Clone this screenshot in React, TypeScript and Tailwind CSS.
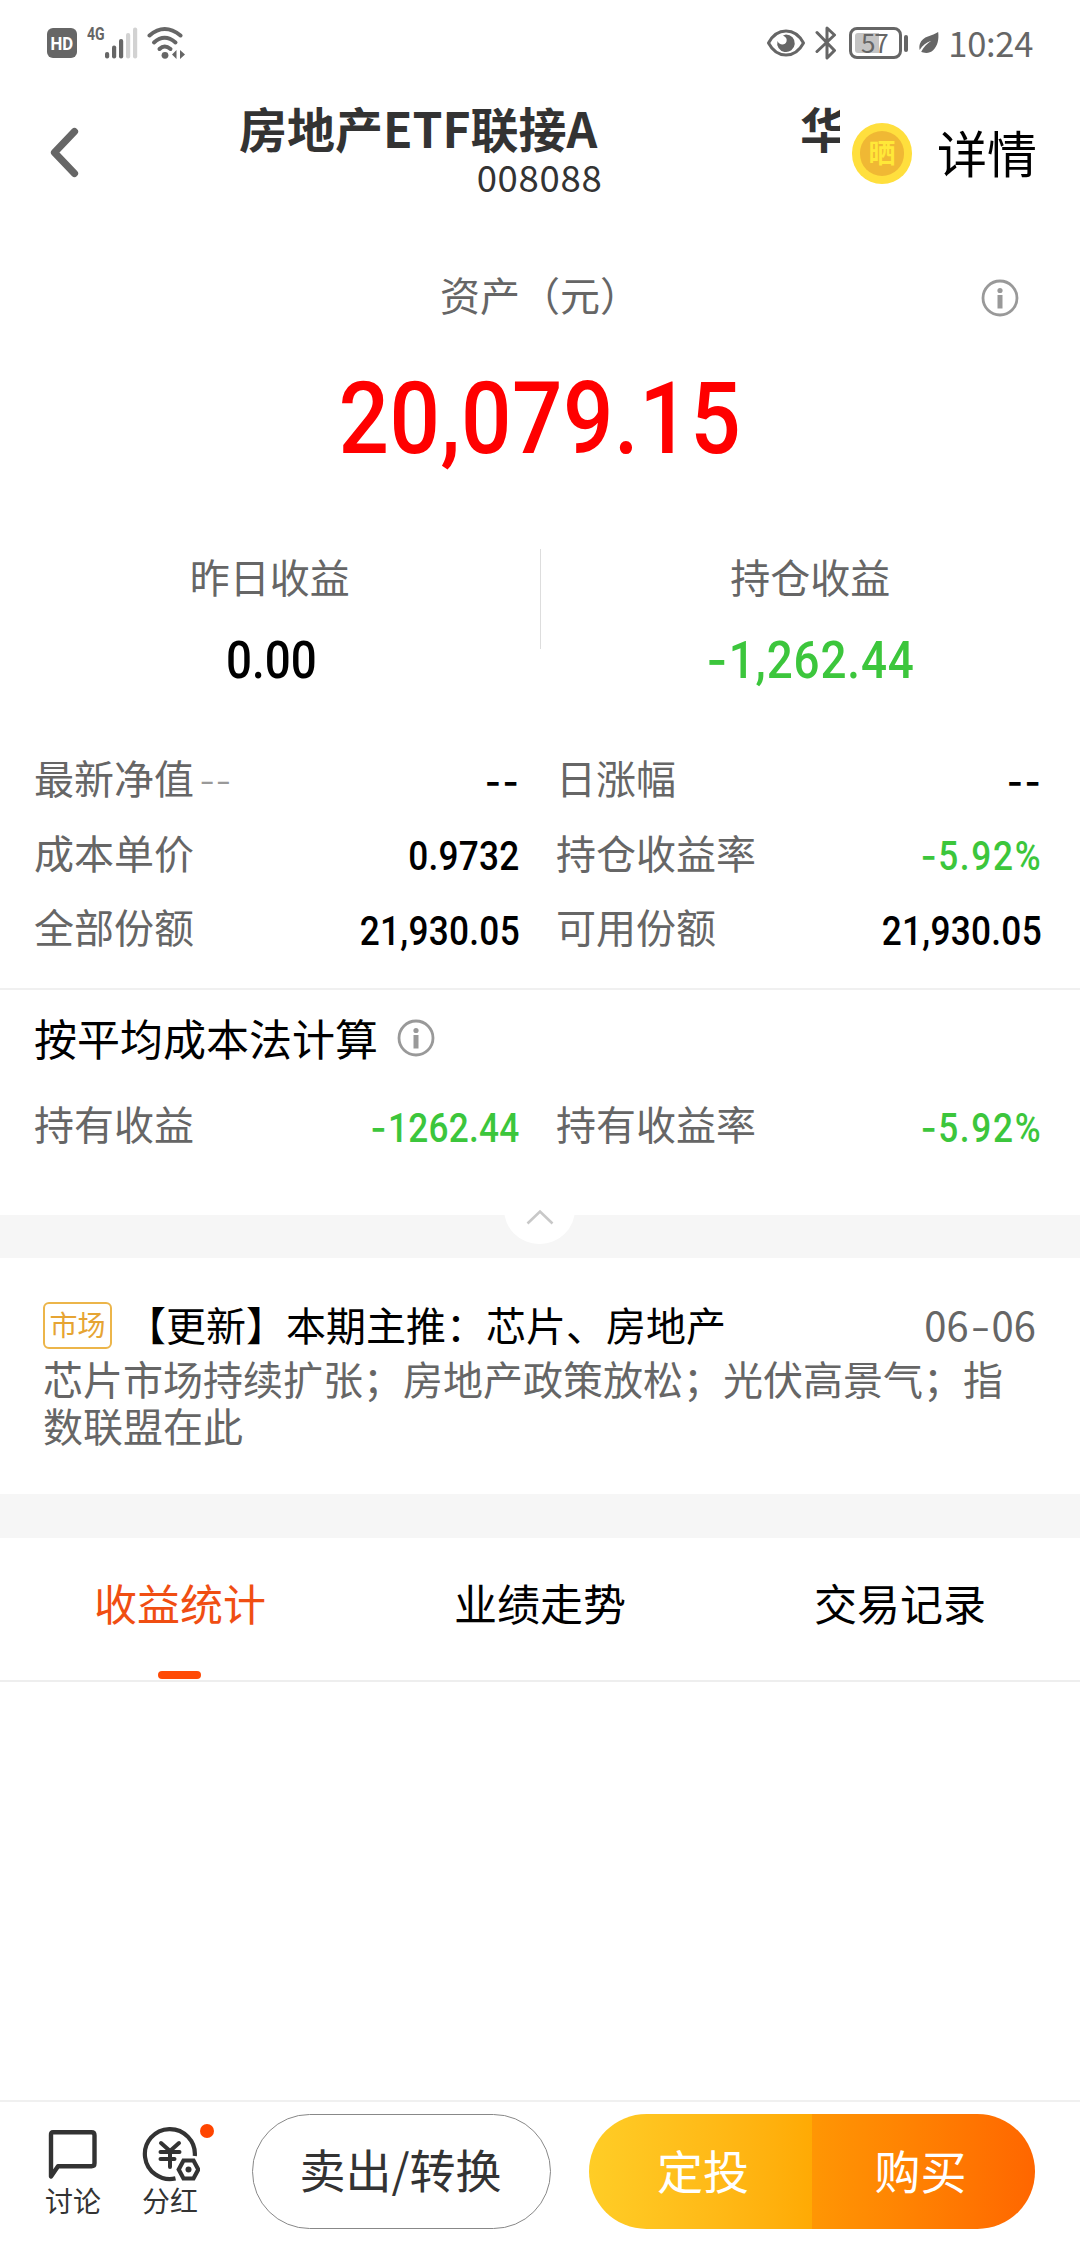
import type { ReactNode } from "react";

type Stat = {
  label: string;
  hint?: string;
  value: string;
  tone?: "up" | "down";
};

const HOLDING_STATS: Stat[] = [
  { label: "最新净值", hint: "--", value: "--" },
  { label: "日涨幅", value: "--" },
  { label: "成本单价", value: "0.9732" },
  { label: "持仓收益率", value: "-5.92%", tone: "down" },
  { label: "全部份额", value: "21,930.05" },
  { label: "可用份额", value: "21,930.05" },
];

const AVERAGE_STATS: Stat[] = [
  { label: "持有收益", value: "-1262.44", tone: "down" },
  { label: "持有收益率", value: "-5.92%", tone: "down" },
];

const TABS = ["收益统计", "业绩走势", "交易记录"];

export default function App() {
  return (
    <div className="flex h-[2244px] w-[1080px] flex-col overflow-hidden bg-white font-['Noto_Sans_CJK_SC',sans-serif] text-black">
      <StatusBar />
      <NavBar />
      <AssetSummary />

      <section className="grid h-[254px] shrink-0 grid-cols-[486px_486px] content-start gap-x-[36px] pl-[34px] pt-[6px]">
        {HOLDING_STATS.map((stat) => (
          <StatRow key={stat.label} stat={stat} />
        ))}
      </section>

      <section className="h-[227px] shrink-0 border-t-2 border-[#f0f0f0] pl-[34px]">
        <div className="flex h-[96px] items-center gap-[19px]">
          <h2 className="mb-[3px] text-[43px] leading-[60px]">按平均成本法计算</h2>
          <InfoIcon />
        </div>
        <div className="grid grid-cols-[486px_486px] gap-x-[36px]">
          {AVERAGE_STATS.map((stat) => (
            <StatRow key={stat.label} stat={stat} />
          ))}
        </div>
      </section>

      <div className="relative h-[43px] shrink-0 bg-[#f6f6f6]">
        <button
          type="button"
          aria-label="收起"
          className="absolute -top-[41px] left-[504px] flex h-[70px] w-[71px] items-end justify-center rounded-full bg-white pb-[18px]"
        >
          <svg width="30" height="18" viewBox="0 0 30 18" fill="none" aria-hidden="true">
            <path d="M2.5 15.5L15 3.5l12.500 12" stroke="#c8c8c8" strokeWidth="2.6" />
          </svg>
        </button>
      </div>

      <MarketNotice />
      <div className="h-[44px] shrink-0 bg-[#f6f6f6]" />
      <Tabs />
      <div className="flex-1" />
      <BottomBar />
    </div>
  );
}

function StatusBar() {
  return (
    <div className="flex h-[86px] shrink-0 items-center justify-between pl-[47px] pr-[47px] text-[#666666]">
      <div className="flex items-center">
        <span className="flex h-[30px] w-[30px] items-center justify-center rounded-[6px] bg-[#666666] font-['Roboto',sans-serif] text-[19px] font-bold leading-none text-white">
          <span className="scale-x-[0.88]">HD</span>
        </span>
        <span className="mb-[18px] ml-[10px] w-[18px] font-['Roboto',sans-serif] text-[18px] font-bold leading-none">
          <span className="inline-block origin-left scale-x-[0.78]">4G</span>
        </span>
        <svg width="34" height="34" viewBox="0 0 34 34" className="-ml-px" aria-hidden="true">
          <rect x="1" y="26" width="4.200" height="6.500" rx="2" fill="#666" />
          <rect x="8" y="19.500" width="4.200" height="13" rx="2" fill="#666" />
          <rect x="15" y="13" width="4.200" height="19.500" rx="2" fill="#666" />
          <rect x="22" y="7" width="4.200" height="25.500" rx="2" fill="#d2d2d2" />
          <rect x="29" y="1.500" width="4.200" height="31" rx="2" fill="#d2d2d2" />
        </svg>
        <svg width="40" height="34" viewBox="0 0 40 34" fill="none" className="ml-[9px]" aria-hidden="true">
          <g stroke="#666" strokeWidth="4" strokeLinecap="round">
            <path d="M2.500 9.500Q17.500-3.500 33.500 9.500" />
            <path d="M7 16.500Q17.500 7 28.500 16.500" />
            <path d="M12.500 23Q17.500 18 23.500 23" />
          </g>
          <circle cx="18" cy="29.300" r="3.400" fill="#666" />
          <path d="M25 28.500l4.500-4.500v9zM38 28.500l-5-4.500v9z" fill="#666" />
        </svg>
      </div>

      <div className="flex items-center">
        <svg width="40" height="28" viewBox="0 0 40 28" fill="none" aria-hidden="true">
          <path
            d="M2.500 14C7 5.500 13 2 20 2s13 3.500 17.500 12c-4.500 8.500-10.500 12-17.500 12S7 22.500 2.500 14z"
            stroke="#666"
            strokeWidth="3"
            strokeLinejoin="round"
          />
          <path d="M20 5.500a8.800 8.800 0 1 1-8.500 6.500c1.500 4.500 8 4.500 9 .5.700-3-.3-4-3.500-6z" fill="#666" />
        </svg>
        <svg width="22" height="36" viewBox="0 0 22 36" fill="none" className="ml-[9px]" aria-hidden="true">
          <path
            d="M2 7.500L19.500 25.500l-7.500 7.500V3l7.500 7L2 26.500"
            stroke="#666"
            strokeWidth="3"
            strokeLinecap="round"
            strokeLinejoin="round"
          />
        </svg>
        <div className="relative ml-[12px] flex h-[32px] w-[53px] items-center justify-center rounded-[8px] border-[3px] border-[#666666]">
          <div className="absolute bottom-[3px] left-[3px] top-[3px] w-[24px] rounded-l-[3px] bg-[#c4c4c4]" />
          <span className="relative mb-[3px] mr-[3px] text-[26px] leading-none tracking-[-1px]">57</span>
        </div>
        <div className="ml-[2px] h-[17px] w-[4px] rounded-full bg-[#666666]" />
        <svg width="22" height="22" viewBox="0 0 22 24" className="ml-[10px]" aria-hidden="true">
          <path
            d="M21 0C15 4.500 4 4 1 13c-.8 2.500-.5 5-.2 6.500C4 14.500 8 11.500 13.500 9.500 9 12.500 5 16.500 2.500 21.500c2.500 1.500 9 2.500 13-1.500C20.500 15 22 8 21 0z"
            fill="#666"
          />
        </svg>
        <span className="mb-[3px] ml-[8px] text-[34.500px] leading-[40px] tracking-[-0.300px]">10:24</span>
      </div>
    </div>
  );
}

function NavBar() {
  return (
    <header className="flex h-[134px] shrink-0 items-center text-[#333333]">
      <button type="button" aria-label="返回" className="w-[239px] pl-[50px]">
        <svg width="30" height="54" viewBox="0 0 30 54" fill="none" aria-hidden="true">
          <path
            d="M24.500 5.500L4.500 26.500l20 21"
            stroke="#666"
            strokeWidth="7.200"
            strokeLinecap="round"
            strokeLinejoin="round"
          />
        </svg>
      </button>
      <div className="w-[601px] overflow-hidden pb-[9px]">
        <div className="flex whitespace-nowrap text-[48px] font-bold leading-[56px]">
          <h1 className="w-[561px] shrink-0">房地产ETF联接A</h1>
          <span>华</span>
        </div>
        <p className="text-center text-[36.500px] leading-[44px] tracking-[0.700px]">008088</p>
      </div>
      <div className="ml-[12px] flex h-[61px] w-[60px] items-center justify-center rounded-full bg-[#ffdf3d]">
        <div className="flex h-[45px] w-[44px] items-center justify-center rounded-full bg-[#f0b834] pb-[3px] text-[27px] font-bold leading-none text-[#ffe838]">
          晒
        </div>
      </div>
      <button type="button" className="mb-[5px] ml-[25px] text-[50px] leading-[60px] text-black">
        详情
      </button>
    </header>
  );
}

function AssetSummary() {
  return (
    <section className="h-[514px] shrink-0">
      <div className="flex h-[150px] items-center pt-[6px]">
        <span className="mb-[8px] ml-[440px] w-[541px] text-[40px] leading-[60px] text-[#666666]">
          资产（元）
        </span>
        <InfoIcon />
      </div>
      <p className="h-[179px] text-center font-['Roboto',sans-serif] text-[101px] font-medium leading-[98px] tracking-[0.600px] text-[#ff0000]">
        <span className="inline-block scale-x-[0.88]">20,079.15</span>
      </p>
      <div className="flex">
        <SummaryItem label="昨日收益">
          <span className="pl-[3px] tracking-normal">0.00</span>
        </SummaryItem>
        <div className="h-[100px] w-px bg-[#dddddd]" />
        <SummaryItem label="持仓收益" down>
          <Amount value="-1,262.44" />
        </SummaryItem>
      </div>
    </section>
  );
}

function SummaryItem({
  label,
  down,
  children,
}: {
  label: string;
  down?: boolean;
  children: ReactNode;
}) {
  return (
    <div className="flex flex-1 flex-col items-center">
      <span className="text-[40px] leading-[54px] text-[#666666]">{label}</span>
      <span
        className={`mt-[28px] scale-x-[0.88] font-['Roboto',sans-serif] text-[52px] font-medium leading-[60px] tracking-[1px] ${
          down ? "text-[#3cc63c]" : "text-black"
        }`}
      >
        {children}
      </span>
    </div>
  );
}

function StatRow({ stat }: { stat: Stat }) {
  return (
    <div className="flex h-[74.500px] items-center justify-between">
      <span className="text-[40px] leading-[60px] text-[#666666]">
        {stat.label}
        {stat.hint && (
          <span className="ml-[5px] font-['Inter',sans-serif] text-[36px] font-light leading-none text-[#999999]">
            {stat.hint}
          </span>
        )}
      </span>
      <span
        className={`origin-right scale-x-[0.88] pt-[11px] font-['Roboto',sans-serif] text-[40px] font-medium leading-[60px] tracking-[0.300px] ${
          stat.tone === "down" ? "text-[#3cc63c]" : "text-black"
        }`}
      >
        <Amount value={stat.value} />
      </span>
    </div>
  );
}

// Roboto's hyphen is too short for a minus sign, so dashes use Inter.
// Its percent sign is a little narrow as well once the figures are condensed.
function Amount({ value }: { value: string }) {
  const dashes = value.match(/^-+/)?.[0] ?? "";
  const figures = value.slice(dashes.length);
  const isPercent = figures.endsWith("%");
  return (
    <>
      {dashes && (
        <span className="font-['Inter',sans-serif] leading-none tracking-[1.500px]">{dashes}</span>
      )}
      <span className={isPercent ? "tracking-[1.900px]" : undefined}>{figures}</span>
    </>
  );
}

function InfoIcon() {
  return (
    <svg width="38" height="38" viewBox="0 0 38 38" fill="none" aria-hidden="true">
      <circle cx="19" cy="19" r="17" stroke="#999" strokeWidth="2.800" />
      <circle cx="19" cy="11.500" r="2.600" fill="#999" />
      <rect x="16.500" y="16" width="5" height="13.500" fill="#999" />
    </svg>
  );
}

function MarketNotice() {
  return (
    <section className="h-[236px] shrink-0 pl-[43px] pr-[44px] pt-[38px]">
      <div className="flex h-[59px] items-center">
        <span className="flex h-[47px] w-[69px] items-center justify-center rounded-[6px] border-2 border-[#ecb54a] pb-[3px] text-[28px] leading-none text-[#e6a433]">
          市场
        </span>
        <span className="mb-[3px] ml-[14px] flex-1 text-[40px] leading-[56px]">
          【更新】本期主推：芯片、房地产
        </span>
        <span className="mb-[3px] text-[40px] leading-[56px] text-[#666666]">
          06<span className="inline-block w-[23px] scale-x-[1.400] text-center">-</span>06
        </span>
      </div>
      <p className="text-[40px] leading-[47px] text-[#666666]">
        芯片市场持续扩张；房地产政策放松；光伏高景气；指数联盟在此
      </p>
    </section>
  );
}

function Tabs() {
  return (
    <nav className="grid h-[144px] shrink-0 grid-cols-3 border-b-2 border-[#eeeeee]">
      {TABS.map((tab, i) => (
        <button
          key={tab}
          type="button"
          className={`flex flex-col items-center justify-between pb-px pt-[34px] text-[43px] leading-[60px] ${
            i === 0 ? "text-[#f04e12]" : "text-black"
          }`}
        >
          {tab}
          {i === 0 && <span className="mr-px h-[8px] w-[43px] rounded-full bg-[#ff4a06]" />}
        </button>
      ))}
    </nav>
  );
}

function BottomBar() {
  return (
    <footer className="flex h-[144px] shrink-0 items-start border-t-2 border-[#f0f0f0] text-[#333333]">
      <button type="button" className="ml-[45px] flex w-[56px] flex-col items-center pt-[24px]">
        <svg width="56" height="56" viewBox="0 0 56 56" fill="none" aria-hidden="true">
          <path
            d="M8 6.200h38.500q3 0 3 3v28q0 3-3 3H13L6 50.500V8.700Q5.800 6.200 8 6.200z"
            stroke="#333"
            strokeWidth="4.400"
            strokeLinejoin="round"
          />
        </svg>
        <span className="text-[28px] leading-[36px]">讨论</span>
      </button>
      <button type="button" className="relative ml-[39px] flex w-[60px] flex-col items-center pt-[24px]">
        <svg width="60" height="56" viewBox="0 0 60 56" fill="none" aria-hidden="true">
          <g stroke="#333" strokeWidth="4.200">
            <path d="M54.800 30A25 25 0 1 0 35.500 52.400" />
            <path
              d="M21 17l9 8 9-8M20.500 26h19M20.500 33h14M30 25v16"
              strokeWidth="4"
              strokeLinecap="round"
            />
            <path d="M43.500 34.500h10l4.800 9-4.800 9h-10l-4.800-9z" />
          </g>
          <circle cx="48.500" cy="43.500" r="3" fill="#333" />
        </svg>
        <span className="text-[28px] leading-[36px]">分红</span>
        <span className="absolute left-[60px] top-[22px] h-[14px] w-[14px] rounded-full bg-[#ff4500]" />
      </button>
      <button
        type="button"
        className="ml-[52px] mt-[12px] h-[115px] w-[299px] rounded-full border border-[#888888] pb-[8px] pr-[2px] text-[46px] leading-[60px]"
      >
        卖出/转换
      </button>
      <div className="ml-[38px] mt-[12px] flex h-[115px] w-[446px] overflow-hidden rounded-full text-[46px] leading-[60px] text-white">
        <button
          type="button"
          className="w-[223px] bg-linear-to-r from-[#ffcd26] to-[#ffaa04] pb-[6px] pl-[5px]"
        >
          定投
        </button>
        <button
          type="button"
          className="w-[223px] bg-linear-to-r from-[#ff9604] to-[#ff6600] pb-[6px] pr-[6px]"
        >
          购买
        </button>
      </div>
    </footer>
  );
}
